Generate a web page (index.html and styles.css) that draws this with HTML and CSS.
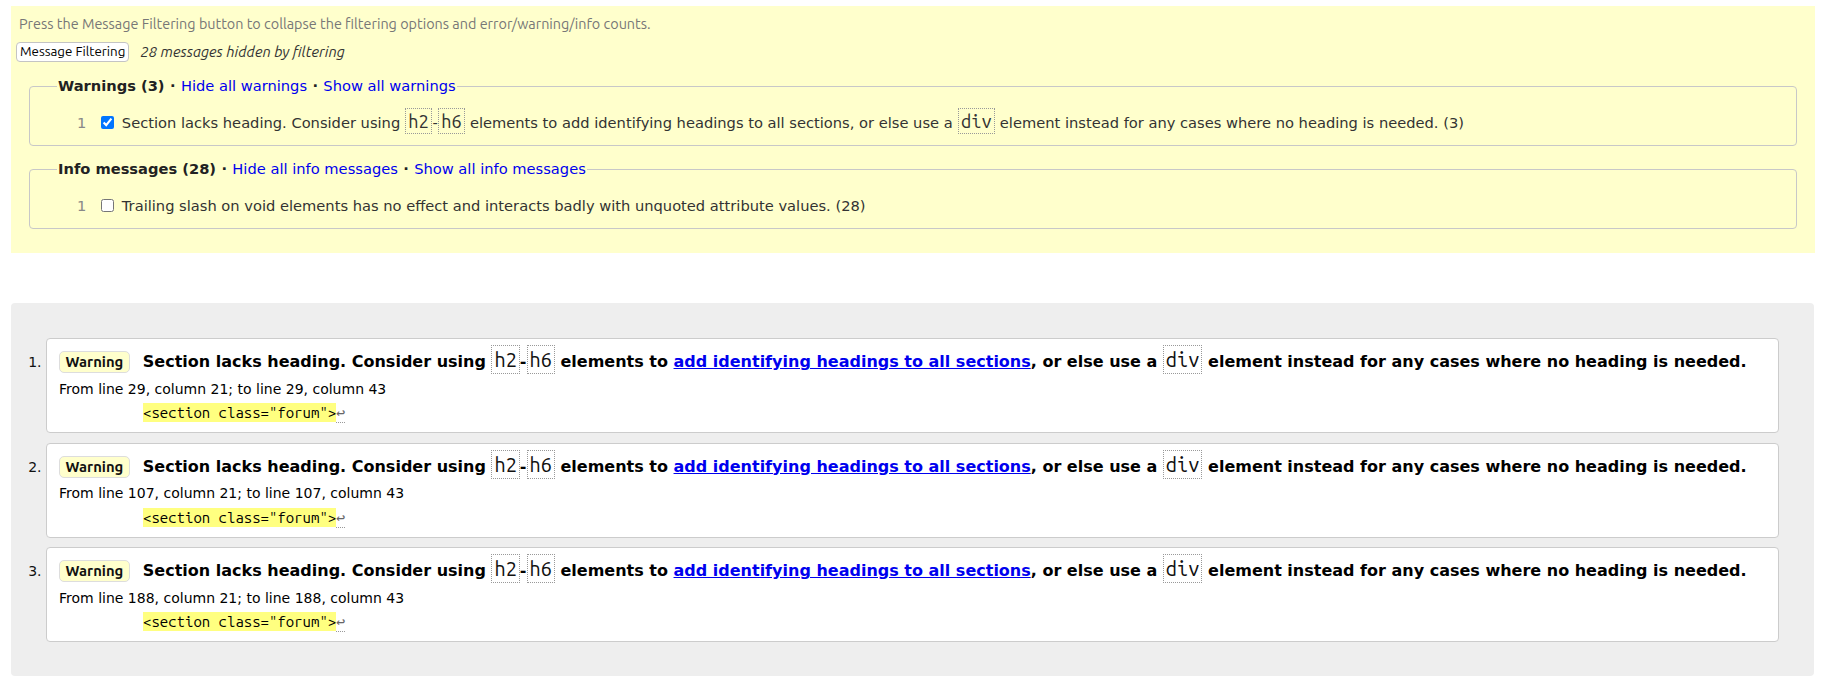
FILE: index.html
```html
<!DOCTYPE html>
<html lang="en">
<head>
<meta charset="utf-8">
<title>Message Filtering</title>
<link rel="stylesheet" href="styles.css">
</head>
<body>
<div class="filters">
  <p class="hint">Press the Message Filtering button to collapse the filtering options and error/warning/info counts.</p>
  <div class="toolbar">
    <button class="filter-btn" type="button">Message Filtering</button>
    <span class="hidden-count">28 messages hidden by filtering</span>
  </div>
  <fieldset class="group">
    <legend><strong>Warnings (3)</strong> <b class="sep">·</b> <a href="#">Hide all warnings</a> <b class="sep">·</b> <a href="#">Show all warnings</a></legend>
    <div class="row">
      <span class="num">1</span>
      <input type="checkbox" checked>
      <span class="msg">Section lacks heading. Consider using <code class="code">h2</code>-<code class="code">h6</code> elements to add identifying headings to all sections, or else use a <code class="code">div</code> element instead for any cases where no heading is needed. (3)</span>
    </div>
  </fieldset>
  <fieldset class="group">
    <legend><strong>Info messages (28)</strong> <b class="sep">·</b> <a href="#">Hide all info messages</a> <b class="sep">·</b> <a href="#">Show all info messages</a></legend>
    <div class="row">
      <span class="num">1</span>
      <input type="checkbox">
      <span class="msg">Trailing slash on void elements has no effect and interacts badly with unquoted attribute values. (28)</span>
    </div>
  </fieldset>
</div>

<div class="results">
  <ol class="list">
    <li class="card">
      <p class="head"><strong class="badge">Warning</strong><span>Section lacks heading. Consider using <code class="code">h2</code>-<code class="code">h6</code> elements to <a href="#">add identifying headings to all sections</a>, or else use a <code class="code">div</code> element instead for any cases where no heading is needed.</span></p>
      <p class="loc">From line 29, column 21; to line 29, column 43</p>
      <p class="extract"><code><b>&lt;section class="forum"&gt;</b><u>↩</u></code></p>
    </li>
    <li class="card">
      <p class="head"><strong class="badge">Warning</strong><span>Section lacks heading. Consider using <code class="code">h2</code>-<code class="code">h6</code> elements to <a href="#">add identifying headings to all sections</a>, or else use a <code class="code">div</code> element instead for any cases where no heading is needed.</span></p>
      <p class="loc">From line 107, column 21; to line 107, column 43</p>
      <p class="extract"><code><b>&lt;section class="forum"&gt;</b><u>↩</u></code></p>
    </li>
    <li class="card">
      <p class="head"><strong class="badge">Warning</strong><span>Section lacks heading. Consider using <code class="code">h2</code>-<code class="code">h6</code> elements to <a href="#">add identifying headings to all sections</a>, or else use a <code class="code">div</code> element instead for any cases where no heading is needed.</span></p>
      <p class="loc">From line 188, column 21; to line 188, column 43</p>
      <p class="extract"><code><b>&lt;section class="forum"&gt;</b><u>↩</u></code></p>
    </li>
  </ol>
</div>
</body>
</html>
```
FILE: styles.css
```css
body {
  margin: 0;
  background: #fff;
  color: #000;
  font-family: "DejaVu Sans", Verdana, sans-serif;
}

a { color: #00e; }

/* ---------- filter panel ---------- */
.filters {
  margin: 6px 13px 0 11px;
  padding: 9px 0 24px;
  background: #ffffcc;
}
.hint {
  margin: 0 0 0 8px;
  font: 14.4px/18px Ubuntu, "Open Sans", sans-serif;
  color: #777;
}
.toolbar {
  display: flex;
  align-items: center;
  height: 20px;
  margin: 9px 0 0 5px;
}
.filter-btn {
  height: 20px;
  margin: 0;
  padding: 1px 3px;
  font: 13.33px/16px Ubuntu, "Open Sans", sans-serif;
  color: #000;
  background: #fff;
  border: 1px solid #c4c4c4;
  border-radius: 4px;
}
.hidden-count {
  margin-left: 11px;
  font: italic 14.9px/18px Ubuntu, "Open Sans", sans-serif;
  color: #333;
}

.group {
  min-width: 0;
  margin: 15px 18px 0;
  padding: 0 0 9px 27px;
  border: 1px solid #c8c8c8;
  border-radius: 4px;
}
.group + .group { margin-top: 14px; }
.group legend {
  padding: 0 1px;
  font-size: 14.67px;
  line-height: 18px;
  color: #222;
}
.group legend a { text-decoration: none; }
.sep {
  margin: 0 0.7px;
  font-weight: bold;
}

.row {
  display: flex;
  align-items: center;
  height: 27px;
  margin-top: 14px;
  padding-left: 20px;
  font-size: 14.67px;
  line-height: 28px;
  color: #333;
}
.num { color: #888; }
.row input {
  width: 13px;
  height: 13px;
  margin: 0 8px 0 14.5px;
}

.code {
  font-family: "Ubuntu Mono", "DejaVu Sans Mono", monospace;
  font-size: 1.25em;
  font-weight: normal;
  line-height: 1;
  padding: 2px;
  border: 1px dotted #999;
}
.row .code { margin: 0 0.5px; }

/* ---------- results ---------- */
.results {
  margin: 50px 14px 0 11px;
  padding: 35px 35px 34px;
  background: #eee;
  border-radius: 4px;
}
.list {
  margin: 0;
  padding: 0;
  list-style: decimal outside;
}
.card {
  padding: 11px 12px 9px;
  font-size: 14px;
  background: #fff;
  border: 1px solid #ccc;
  border-radius: 4px;
}
.card + .card { margin-top: 9.5px; }
.card::marker { color: #111; }

.head {
  margin: 0;
  font-size: 16px;
  line-height: 24px;
  font-weight: bold;
}
.head .code { color: #111; }
.badge {
  display: inline-block;
  margin-right: 13px;
  padding: 1px 5.5px;
  font: bold 14.8px/18px Ubuntu, "Open Sans", sans-serif;
  color: #111;
  background: #ffffcc;
  border: 1px solid #ddd;
  border-radius: 5px;
}
.loc {
  margin: 4.5px 0 0;
  line-height: 20px;
}
.extract {
  margin: 4.5px 0 0;
  padding-left: 84px;
  line-height: 20px;
}
.extract code {
  font-family: "Ubuntu Mono", "DejaVu Sans Mono", monospace;
  font-size: 15px;
}
.extract b {
  font-weight: normal;
  padding: 1px 0;
  background: #ffff80;
}
.extract u {
  padding: 1px 0;
  color: #666;
  text-decoration: none;
  border-bottom: 1px dotted #999;
}
```
